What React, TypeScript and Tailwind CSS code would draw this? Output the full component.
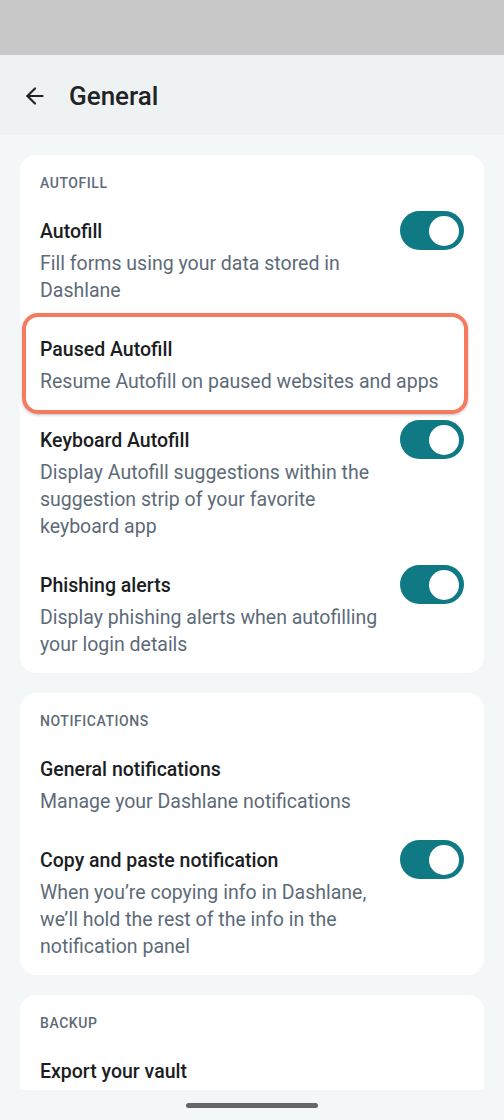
import React from 'react';
import { ArrowLeft } from 'lucide-react';

type Row = {
  title: string;
  desc?: string;
  toggle?: boolean;
  highlight?: boolean;
};

const autofillRows: Row[] = [
  { title: 'Autofill', desc: 'Fill forms using your data stored in Dashlane', toggle: true },
  { title: 'Paused Autofill', desc: 'Resume Autofill on paused websites and apps', highlight: true },
  {
    title: 'Keyboard Autofill',
    desc: 'Display Autofill suggestions within the suggestion strip of your favorite keyboard app',
    toggle: true,
  },
  { title: 'Phishing alerts', desc: 'Display phishing alerts when autofilling your login details', toggle: true },
];

const notificationRows: Row[] = [
  { title: 'General notifications', desc: 'Manage your Dashlane notifications' },
  {
    title: 'Copy and paste notification',
    desc: 'When you\u2019re copying info in Dashlane, we\u2019ll hold the rest of the info in the notification panel',
    toggle: true,
  },
];

const Toggle: React.FC = () => (
  <div className="w-[64px] h-[39px] rounded-full bg-[#0f7a84] flex items-center justify-end pr-[5px] shrink-0">
    <div className="w-[30px] h-[30px] rounded-full bg-white" />
  </div>
);

const SettingRow: React.FC<{ row: Row }> = ({ row }) => (
  <div className="relative flex items-start px-[20px] pt-[17px] pb-[15px]">
    {row.highlight && (
      <div className="absolute -top-[6px] -bottom-[4px] left-[2px] right-[16px] rounded-[16px] border-4 border-[#f47a60] shadow-[0_1px_3px_rgba(0,0,0,0.25)]" />
    )}
    <div className={row.toggle ? 'w-[345px]' : 'flex-1'}>
      <div className="text-[19.5px] leading-[28px] font-medium text-[#1b1d1f]">{row.title}</div>
      {row.desc && <div className="mt-[4px] text-[19.5px] leading-[27px] text-[#5d6b78]">{row.desc}</div>}
    </div>
    {row.toggle && (
      <div className="ml-auto -mt-[7px]">
        <Toggle />
      </div>
    )}
  </div>
);

const Section: React.FC<{ label: string; rows: Row[] }> = ({ label, rows }) => (
  <section className="bg-white rounded-[16px] shrink-0">
    <div className="px-[20px] pt-[20px] pb-[10px] text-[14px] leading-[16px] font-medium tracking-[0.04em] text-[#5d6b78]">
      {label}
    </div>
    {rows.map((r) => (
      <SettingRow key={r.title} row={r} />
    ))}
  </section>
);

export default function App() {
  return (
    <div
      className="w-[504px] h-[1120px] overflow-hidden flex flex-col bg-[#f4f7f8]"
      style={{ fontFamily: 'Roboto, "Noto Sans", sans-serif' }}
    >
      <div className="h-[55px] bg-[#c8c8c8] shrink-0" />

      <header className="h-[80px] bg-[#eef2f3] flex items-center pl-[22px] pt-[2px] shrink-0">
        <ArrowLeft className="w-[26px] h-[26px] text-[#1f2326]" strokeWidth={2} />
        <h1 className="ml-[21px] text-[26px] font-medium text-[#1f2326]">General</h1>
      </header>

      <main className="flex-1 overflow-hidden px-[20px] pt-[20px] flex flex-col gap-[20px]">
        <Section label="AUTOFILL" rows={autofillRows} />
        <Section label="NOTIFICATIONS" rows={notificationRows} />
        <Section label="BACKUP" rows={[{ title: 'Export your vault' }]} />
      </main>

      <div className="h-[30px] shrink-0 flex items-center justify-center">
        <div className="w-[132px] h-[5px] rounded-full bg-[#666666]" />
      </div>
    </div>
  );
}
